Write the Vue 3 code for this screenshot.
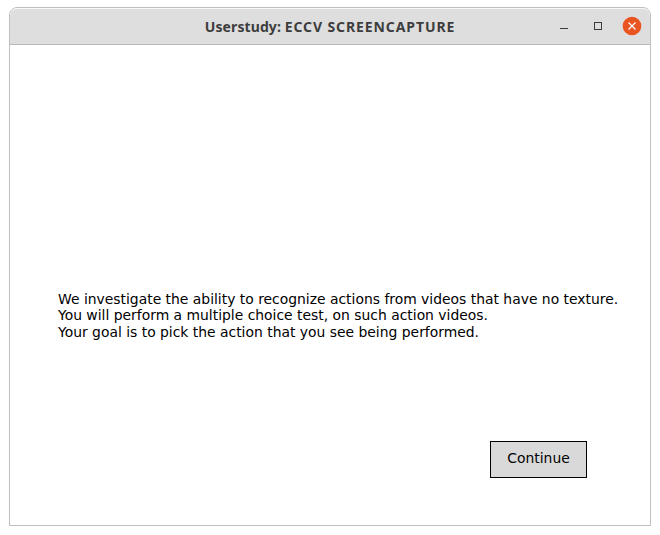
<script setup>
const lines = [
  'We investigate the ability to recognize actions from videos that have no texture.',
  'You will perform a multiple choice test, on such action videos.',
  'Your goal is to pick the action that you see being performed.',
]
</script>

<template>
  <div class="desktop">
    <main class="window">
      <header class="titlebar">
        <span class="spacer"></span>
        <h1 class="title">Userstudy: <span class="caps">ECCV SCREENCAPTURE</span></h1>
        <svg class="controls" width="98" height="36" viewBox="0 0 98 36">
          <path d="M8 20.5h8" stroke="#3d3d3d" />
          <rect x="42.5" y="14.5" width="7" height="7" fill="none" stroke="#3d3d3d" />
          <circle cx="80" cy="18" r="9.3" fill="#e95420" />
          <path d="M76.5 14.5l7 7m0-7l-7 7" stroke="#fff" stroke-width="1.3" />
        </svg>
      </header>
      <section class="content">
        <p class="copy"><span v-for="line in lines" :key="line" class="line">{{ line }}</span></p>
        <button class="continue">Continue</button>
      </section>
    </main>
  </div>
</template>

<style>
body { background: #fff; }
</style>

<style scoped>
.desktop { box-sizing: border-box; width: 660px; height: 535px; padding: 7px 9px 9px; background: #fff; }
.window { box-sizing: border-box; display: flex; flex-direction: column; width: 642px; height: 519px; border: 1px solid #bfbfbf; border-radius: 8px 8px 0 0; overflow: hidden; }
.titlebar { box-sizing: border-box; display: grid; grid-template-columns: 98px 1fr 98px; height: 37px; background: #dedede; border-bottom: 1px solid #b8b8b8; border-radius: 7px 7px 0 0; box-shadow: inset 0 1px 0 #f7f7f7; }
.title { margin: 0; text-align: center; font: 700 14px/37px "Noto Sans", sans-serif; letter-spacing: .1px; color: #3d3d3d; white-space: nowrap; }
.caps { letter-spacing: .9px; }
.content { flex: 1; display: flex; flex-direction: column; padding: 245px 63px 0 48px; font: 13.9px/16.5px "DejaVu Sans", sans-serif; color: #000; }
.copy { margin: 0; padding-top: .5px; white-space: nowrap; }
.line { display: block; }
.continue { box-sizing: border-box; align-self: flex-end; width: 97px; height: 37px; margin-top: 101px; padding: 0 0 2px; background: #d9d9d9; border: 1px solid #000; font: inherit; color: #000; }
</style>
